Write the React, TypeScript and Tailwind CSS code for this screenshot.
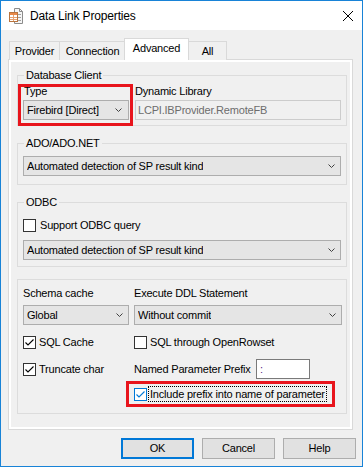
import type { ReactNode } from "react"

const Chevron = () => (
  <svg width="7" height="4" viewBox="0 0 7 4" className="shrink-0">
    <polyline points="0.5,0.5 3.5,3.5 6.5,0.5" fill="none" stroke="#404040" strokeWidth="1" />
  </svg>
)

function ComboBox({ value, className }: { value: string, className: string }) {
  return (
    <div className={`flex h-[20px] items-center justify-between border border-[#adadad] bg-[#e5e5e5] pl-[3px] pr-[5px] ${className}`}>
      <span className="truncate">{value}</span>
      <Chevron />
    </div>
  )
}

function CheckBox({ checked, accent }: { checked?: boolean, accent?: boolean }) {
  return (
    <span className={`flex h-[13px] w-[13px] shrink-0 items-center justify-center border bg-white ${accent ? "border-[#0078d7]" : "border-[#333333]"}`}>
      {checked && (
        <svg width="11" height="11" viewBox="0 0 11 11">
          <polyline points="1.5,5.5 4,8 9.5,2.5" fill="none" stroke={accent ? "#0078d7" : "#000000"} strokeWidth="1.1" />
        </svg>
      )}
    </span>
  )
}

function Group({ title, className, children }: { title?: string, className: string, children: ReactNode }) {
  return (
    <div className={`ml-[6px] w-[330px] border border-[#dcdcdc] ${className}`}>
      {title && (
        <div className="-mt-[7px] ml-[6px] w-fit bg-[#f0f0f0] px-[2px] leading-[13px]">{title}</div>
      )}
      {children}
    </div>
  )
}

const TitleIcon = () => (
  <svg width="14" height="16" viewBox="0 0 14 16">
    <path d="M5.5 0.5 H10.5 L13.5 3.5 V15.5 H5.5 Z" fill="#f6f6f6" stroke="#8c8c8c" />
    <path d="M10.5 0.5 V3.5 H13.5" fill="none" stroke="#8c8c8c" />
    <line x1="9" y1="6.5" x2="12" y2="6.5" stroke="#a0a0a0" />
    <line x1="9" y1="9.5" x2="12" y2="9.5" stroke="#a0a0a0" />
    <line x1="9" y1="12.5" x2="12" y2="12.5" stroke="#a0a0a0" />
    <rect x="0.5" y="4.5" width="8" height="9" fill="#ffffff" stroke="#b9743e" />
    <rect x="1" y="5" width="7" height="2" fill="#e8894a" />
    <line x1="1" y1="9.5" x2="8" y2="9.5" stroke="#e8a272" />
    <line x1="1" y1="11.5" x2="8" y2="11.5" stroke="#e8a272" />
    <line x1="4.5" y1="7" x2="4.5" y2="13" stroke="#e8a272" />
  </svg>
)

export default function App() {
  return (
    <div className="flex h-[467px] w-[363px] flex-col overflow-hidden border border-[#1883d7] bg-[#f0f0f0] font-['Liberation_Sans',Arial,sans-serif] text-[11px] tracking-[-0.2px] text-black">
      {/* title bar */}
      <div className="flex h-[29px] shrink-0 items-center bg-white pl-[8px] pr-[9px]">
        <TitleIcon />
        <span className="ml-[7px] text-[12px] tracking-[-0.15px]">Data Link Properties</span>
        <svg width="10" height="10" viewBox="0 0 10 10" className="ml-auto">
          <path d="M0 0 L10 10 M10 0 L0 10" stroke="#000000" strokeWidth="1" />
        </svg>
      </div>

      {/* tabs */}
      <div className="relative z-10 -mb-px ml-[8px] mt-[8px] flex items-end">
        <div className="flex h-[19px] w-[51px] items-center justify-center border border-b-0 border-[#d9d9d9] bg-[#f0f0f0]">Provider</div>
        <div className="-ml-px flex h-[19px] w-[67px] items-center justify-center border border-b-0 border-[#d9d9d9] bg-[#f0f0f0]">Connection</div>
        <div className="z-10 -ml-[2px] flex h-[22px] w-[65px] items-center justify-center border border-b-0 border-[#d9d9d9] bg-white pb-[2px]">Advanced</div>
        <div className="-ml-px flex h-[19px] w-[39px] items-center justify-center border border-b-0 border-[#d9d9d9] bg-[#f0f0f0]">All</div>
      </div>

      {/* tab panel */}
      <div className="ml-[7px] h-[371px] w-[345px] shrink-0 border border-[#d9d9d9] bg-white p-[2px]">
        <div className="h-full bg-[#f0f0f0] pt-[13px]">
          <Group title="Database Client" className="">
            <div className="-mb-px mt-[2px] flex">
              <div className="h-[42px] w-[115px] border-[3px] border-[#e8141c]">
                <div className="-mt-[2px] pl-[3px] leading-[12px]">Type</div>
                <ComboBox value="Firebird [Direct]" className="ml-[2px] mt-[3px] h-[18px] w-[106px] pr-[6px]" />
              </div>
              <div className="ml-[2px] pt-[1px]">
                <div className="leading-[12px]">Dynamic Library</div>
                <div className="mt-[3px] flex h-[20px] w-[206px] items-center border border-[#cccccc] bg-[#f0f0f0] pl-[2px] text-[#6d6d6d]">
                  LCPI.IBProvider.RemoteFB
                </div>
              </div>
            </div>
          </Group>

          <Group title="ADO/ADO.NET" className="mt-[17px] pb-[8px]">
            <ComboBox value="Automated detection of SP result kind" className="ml-[5px] mt-[6px] w-[318px]" />
          </Group>

          <Group title="ODBC" className="mt-[17px] pb-[6px]">
            <div className="ml-[5px] mt-[10px] flex h-[13px] items-center gap-[4px]">
              <CheckBox />
              <span>Support ODBC query</span>
            </div>
            <ComboBox value="Automated detection of SP result kind" className="ml-[5px] mt-[8px] w-[318px]" />
          </Group>

          <Group className="mt-[12px] pb-[6px]">
            <div className="flex gap-[5px] pl-[5px] pt-[7px] leading-[12px]">
              <div className="w-[106px]">Schema cache</div>
              <div>Execute DDL Statement</div>
            </div>
            <div className="mt-[6px] flex gap-[5px] pl-[5px]">
              <ComboBox value="Global" className="w-[106px]" />
              <ComboBox value="Without commit" className="w-[208px]" />
            </div>
            <div className="mt-[11px] flex h-[13px] gap-[5px] pl-[5px]">
              <div className="flex w-[106px] items-center gap-[3px]">
                <CheckBox checked />
                <span>SQL Cache</span>
              </div>
              <div className="flex items-center gap-[3px]">
                <CheckBox />
                <span>SQL through OpenRowset</span>
              </div>
            </div>
            <div className="mt-[10px] flex h-[20px] items-center gap-[5px] pl-[5px]">
              <div className="flex w-[106px] items-center gap-[3px]">
                <CheckBox checked />
                <span>Truncate char</span>
              </div>
              <span className="w-[117px]">Named Parameter Prefix</span>
              <div className="flex h-[20px] w-[54px] items-center border border-[#7a7a7a] bg-white pl-[3px] text-[#5b1f8a]">:</div>
            </div>
            <div className="ml-[108px] mt-[2px] flex h-[26px] w-[209px] items-center border-[3px] border-[#e8141c] pl-[5px]">
              <CheckBox checked accent />
              <span className="ml-[1px] border border-dotted border-black px-[1px] leading-[14px]">Include prefix into name of parameter</span>
            </div>
          </Group>
        </div>
      </div>

      {/* buttons */}
      <div className="mt-[8px] flex justify-end gap-[8px] pr-[6px]">
        <button className="h-[21px] w-[73px] border-2 border-[#0078d7] bg-[#e1e1e1]">OK</button>
        <button className="h-[21px] w-[73px] border border-[#adadad] bg-[#e1e1e1]">Cancel</button>
        <button className="h-[21px] w-[73px] border border-[#adadad] bg-[#e1e1e1]">Help</button>
      </div>
    </div>
  )
}
